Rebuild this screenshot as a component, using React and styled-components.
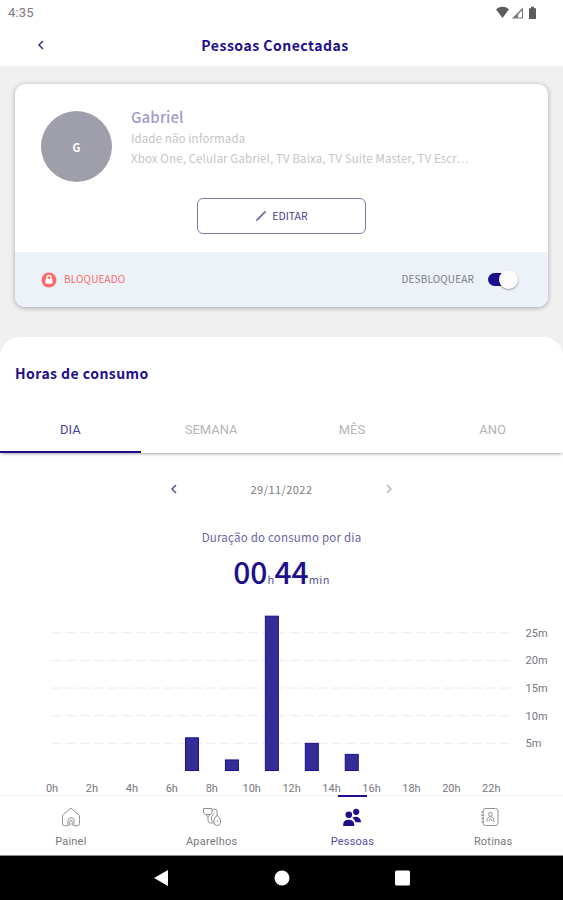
import React, { useState } from "react";
import styled, { createGlobalStyle, ThemeProvider } from "styled-components";

const theme = {
  colors: {
    navy: "#1d0f8c",
    text: "#7b7b80",
    muted: "#b5b5b5",
    red: "#f96a6a",
  },
  fonts: {
    brand: '"Noto Sans CJK SC", "Noto Sans", sans-serif',
    system: 'Roboto, "Liberation Sans", sans-serif',
  },
};

const GlobalStyle = createGlobalStyle`
  * {
    box-sizing: border-box;
  }
  body {
    margin: 0;
    background: #ffffff;
  }
  button {
    font: inherit;
    color: inherit;
    background: none;
    border: 0;
    padding: 0;
    letter-spacing: inherit;
  }
`;

const Screen = styled.div`
  width: 563px;
  height: 900px;
  display: flex;
  flex-direction: column;
  overflow: hidden;
  background: #f0f0f0;
  font-family: ${({ theme }) => theme.fonts.brand};
  color: ${({ theme }) => theme.colors.text};
`;

const StatusBar = styled.div`
  display: flex;
  justify-content: space-between;
  align-items: center;
  height: 24px;
  padding: 1px 24px 0 8px;
  background: #ffffff;
  font-family: ${({ theme }) => theme.fonts.system};
  font-size: 13px;
  letter-spacing: 0.2px;
`;

const Header = styled.header`
  display: grid;
  grid-template-columns: 68px 1fr 54px;
  align-items: center;
  justify-items: center;
  height: 42px;
  background: #ffffff;
  color: ${({ theme }) => theme.colors.navy};
  button {
    display: flex;
    padding-left: 13px;
  }
`;

const Title = styled.h1`
  margin: 0;
  padding-right: 27px;
  font-size: 14px;
  line-height: 20px;
  font-weight: 700;
  letter-spacing: 0.5px;
  white-space: nowrap;
`;

const Card = styled.section`
  flex: none;
  height: 223px;
  margin: 18px 15px 30px;
  border-radius: 10px;
  overflow: hidden;
  background: #ffffff;
  box-shadow: 0 1px 5px rgba(0, 0, 0, 0.32);
`;

const Profile = styled.div`
  display: flex;
  height: 114px;
  padding: 27px 27px 0 26px;
`;

const Avatar = styled.div`
  display: flex;
  align-items: center;
  justify-content: center;
  width: 71px;
  height: 71px;
  margin-right: 19px;
  border-radius: 50%;
  background: #9f9eab;
  color: #ffffff;
  font-size: 11px;
  font-weight: 700;
`;

const Person = styled.div`
  h2 {
    margin: -4px 0 1px;
    font-size: 15px;
    line-height: 20px;
    font-weight: 500;
    letter-spacing: 0.1px;
    color: #a29bd0;
  }
  p {
    margin: 0;
    font-size: 11.5px;
    line-height: 20px;
    letter-spacing: 0.12px;
    color: #c3c5c7;
    white-space: nowrap;
  }
`;

const EditButton = styled.button`
  display: flex;
  align-items: center;
  justify-content: center;
  gap: 5px;
  width: 169px;
  height: 36px;
  margin: 0 auto 18px;
  padding-bottom: 1px;
  border: 1px solid #7d78b2;
  border-radius: 6px;
  font-size: 10.5px;
  color: #4a4290;
`;

const CardFooter = styled.div`
  display: flex;
  align-items: center;
  height: 55px;
  padding: 0 31px 0 26px;
  background: #edf2f8;
  font-size: 10px;
  line-height: 16px;
  letter-spacing: 0.15px;
`;

const FooterText = styled.span`
  margin-top: -2px;
`;

const Blocked = styled.span`
  display: flex;
  align-items: center;
  gap: 7px;
  margin-right: auto;
  color: ${({ theme }) => theme.colors.red};
`;

const Switch = styled.button`
  display: flex;
  align-items: center;
  justify-content: ${({ $on }) => ($on ? "flex-end" : "flex-start")};
  width: 29px;
  height: 13px;
  margin-left: 14px;
  border-radius: 7px;
  background: ${({ $on, theme }) => ($on ? theme.colors.navy : "#b9b9c0")};
`;

const Knob = styled.span`
  flex: none;
  width: 19px;
  height: 19px;
  margin-right: -1px;
  border-radius: 50%;
  background: #fcfcfc;
  box-shadow: 0 1px 2px rgba(0, 0, 0, 0.35);
`;

const Panel = styled.main`
  flex: none;
  height: 458px;
  border-radius: 20px 20px 0 0;
  background: #ffffff;
`;

const PanelTitle = styled.h3`
  margin: 0;
  padding: 26px 15px 0;
  height: 70px;
  font-size: 14px;
  line-height: 20px;
  font-weight: 700;
  letter-spacing: 0.45px;
  color: ${({ theme }) => theme.colors.navy};
`;

const Tabs = styled.div`
  display: grid;
  grid-template-columns: repeat(4, 1fr);
  height: 46px;
  box-shadow: 0 2px 3px -1px rgba(0, 0, 0, 0.35);
  font-family: ${({ theme }) => theme.fonts.system};
  font-size: 13px;
`;

const Tab = styled.button`
  border-bottom: 2px solid
    ${({ $active, theme }) => ($active ? theme.colors.navy : "transparent")};
  color: ${({ $active, theme }) => ($active ? "#4a4290" : theme.colors.muted)};
`;

const DateRow = styled.div`
  display: flex;
  align-items: center;
  justify-content: space-between;
  width: 223px;
  height: 20px;
  margin: 26px auto 0;
  font-size: 11px;
  letter-spacing: 0.45px;
  svg {
    display: block;
  }
`;

const Caption = styled.p`
  margin: 28px 0 0;
  text-align: center;
  font-size: 11.5px;
  line-height: 20px;
  letter-spacing: 0.22px;
  color: #6a64a4;
`;

const Duration = styled.p`
  display: flex;
  align-items: baseline;
  justify-content: center;
  margin: 4px 0 0;
  height: 40px;
  line-height: 40px;
  font-size: 30px;
  font-weight: 500;
  color: ${({ theme }) => theme.colors.navy};
  small {
    font-size: 11px;
    font-weight: 400;
    letter-spacing: 0.4px;
    color: #5b549c;
  }
`;

const ChartSvg = styled.svg`
  display: block;
  margin-top: 17px;
  overflow: visible;
  font-family: ${({ theme }) => theme.fonts.system};
  font-size: 11px;
  fill: #77777d;
`;

const BottomNav = styled.nav`
  flex: none;
  display: grid;
  grid-template-columns: repeat(4, 1fr);
  height: 61px;
  background: #ffffff;
  border-bottom: 1px solid #8b8b8b;
  font-family: ${({ theme }) => theme.fonts.system};
  font-size: 11px;
  letter-spacing: 0.2px;
`;

const NavItem = styled.button`
  display: flex;
  flex-direction: column;
  align-items: center;
  padding-left: 1px;
  border-top: 1px solid #f1f1f1;
  color: ${({ $active }) => ($active ? "#554ca6" : "#77777c")};
  svg {
    margin: 11px 0 8px;
  }
`;

const Marker = styled.span`
  width: 29px;
  height: 2px;
  margin-top: -1px;
  margin-bottom: -1px;
  background: ${({ $active, theme }) =>
    $active ? theme.colors.navy : "transparent"};
`;

const SystemBar = styled.div`
  flex: none;
  display: flex;
  justify-content: center;
  align-items: center;
  height: 44px;
  background: #000000;
`;

const Chevron = ({ right, color }) => (
  <svg width="8" height="12" viewBox="0 0 8 12" fill="none">
    <path
      d={right ? "M2 2l4 4-4 4" : "M6 2L2 6l4 4"}
      stroke={color}
      strokeWidth="1.5"
    />
  </svg>
);

const StatusIcons = () => (
  <svg width="44" height="14" viewBox="0 0 44 14" fill="#5c5c5c">
    <path d="M1 3.2Q7.5-1.6 14 3.2L7.5 12z" />
    <path d="M17 12.4L28 1.4v11z" fill="#777" />
    <path d="M23 8.6l4-4.2v7h-4z" fill="#fff" />
    <path d="M34 2.2h2V.8h3v1.400h2V13h-7z" />
  </svg>
);

const HomeIcon = () => (
  <svg width="20" height="20" viewBox="0 0 20 20" fill="none" stroke="#929297">
    <path d="M1.5 8.5L10 1l8.500 7.500v8a2.200 2.200 0 0 1-2.200 2.200h-3.300v-5a3 3 0 0 0-6 0v5H3.700a2.200 2.200 0 0 1-2.200-2.200z" />
    <path d="M8.800 18.700v-4.200a1.200 1.200 0 0 1 2.400 0v4.200" />
  </svg>
);

const DevicesIcon = () => (
  <svg width="20" height="20" viewBox="0 0 20 20" fill="none" stroke="#929297">
    <path d="M1.500 1.500h8.500v4.500L8.500 7.500h-5l-2-1.500z" />
    <path d="M10 3.500Q12.500.8 15 3.200V9M4 7.500l2 2.500 2-2.500M6 10v3.500q0 2.500 3 2.500h2.500" />
    <path d="M12 6.500l-2.500 3v4l2.500 1.500" />
    <path d="M15.200 8.500q3.300 2 3.300 5v2.500q0 2.500-3.200 2.500t-3.300-2.500v-2.500q0-3 3.200-5z" />
    <path d="M15.200 13.500v1.500" />
  </svg>
);

const PeopleIcon = () => (
  <svg width="20" height="20" viewBox="0 0 20 20" fill="#1d0f8c">
    <circle cx="6.800" cy="7.800" r="3.300" />
    <circle cx="14.200" cy="4.800" r="3.100" />
    <path d="M1.200 19v-1.500q0-4.800 5.400-4.800t5.600 4.800V19z" />
    <path d="M10.300 10.500q7-2.500 8.700 3.800v1h-5.500q-.8-2.600-3.200-4.800z" />
  </svg>
);

const RoutineIcon = () => (
  <svg width="26" height="20" viewBox="0 0 26 20" fill="none" stroke="#929297">
    <rect x="3" y="1.500" width="15" height="17" rx="2.500" />
    <path d="M1.200 5h3M1.200 8.300h3M1.200 11.600h3M1.200 15h3" />
    <circle cx="10.500" cy="7.300" r="1.900" />
    <path d="M7 14.700q0-5 3.500-5t3.500 5M8.800 14.200l1.700-2.700 1.700 2.700" />
  </svg>
);

const usage = [
  { hour: 7, minutes: 6 },
  { hour: 9, minutes: 2 },
  { hour: 11, minutes: 28 },
  { hour: 13, minutes: 5 },
  { hour: 15, minutes: 3 },
];

const hours = [0, 2, 4, 6, 8, 10, 12, 14, 16, 18, 20, 22];
const minuteMarks = [5, 10, 15, 20, 25];

const BASE = 163;
const PER_MINUTE = 5.53;
const hourX = (hour) => 52 + hour * 19.97;

const UsageChart = () => (
  <ChartSvg width="563" height="185" viewBox="0 0 563 185">
    {minuteMarks.map((m) => (
      <g key={m}>
        <line
          x1="51.5"
          x2="514"
          y1={BASE - m * PER_MINUTE}
          y2={BASE - m * PER_MINUTE}
          stroke="#ebebeb"
          strokeDasharray="10 4"
        />
        <text x="525.500" y={BASE - m * PER_MINUTE + 4}>
          {m}m
        </text>
      </g>
    ))}
    {usage.map(({ hour, minutes }) => (
      <rect
        key={hour}
        x={hourX(hour) - 6.3}
        y={BASE - minutes * PER_MINUTE}
        width="13"
        height={minutes * PER_MINUTE - 0.5}
        fill="#362c98"
        stroke="#1d0f8c"
      />
    ))}
    {hours.map((h) => (
      <text key={h} x={hourX(h)} y="184" textAnchor="middle">
        {`${h}h`}
      </text>
    ))}
  </ChartSvg>
);

const tabs = ["DIA", "SEMANA", "MÊS", "ANO"];

const navItems = [
  { label: "Painel", Icon: HomeIcon },
  { label: "Aparelhos", Icon: DevicesIcon },
  { label: "Pessoas", Icon: PeopleIcon },
  { label: "Rotinas", Icon: RoutineIcon },
];

const App = () => {
  const [blocked, setBlocked] = useState(true);
  const [tab, setTab] = useState("DIA");
  const [page, setPage] = useState("Pessoas");

  return (
    <ThemeProvider theme={theme}>
      <GlobalStyle />
      <Screen>
        <StatusBar>
          <span>4:35</span>
          <StatusIcons />
        </StatusBar>
        <Header>
          <button aria-label="Voltar">
            <Chevron color="#3c3194" />
          </button>
          <Title>Pessoas Conectadas</Title>
        </Header>

        <Card>
          <Profile>
            <Avatar>G</Avatar>
            <Person>
              <h2>Gabriel</h2>
              <p>Idade não informada</p>
              <p>Xbox One, Celular Gabriel, TV Baixa, TV Suite Master, TV Escr…</p>
            </Person>
          </Profile>
          <EditButton>
            <svg width="12" height="12" viewBox="0 0 12 12">
              <path d="M.8 11.200l.7-2.200L10 .8l1.200 1.200-8.200 8.200z" fill="#726cab" />
            </svg>
            EDITAR
          </EditButton>
          <CardFooter>
            <Blocked>
              <svg width="16" height="16" viewBox="0 0 16 16" fill="none">
                <circle cx="8" cy="8" r="7.500" fill="#f96a6a" />
                <rect x="4.500" y="6.800" width="7" height="5" rx="1" fill="#fff" />
                <path d="M6 7V5.500a2 2 0 0 1 4 0V7" stroke="#fff" strokeWidth="1.300" />
              </svg>
              <FooterText>BLOQUEADO</FooterText>
            </Blocked>
            <FooterText>DESBLOQUEAR</FooterText>
            <Switch $on={blocked} onClick={() => setBlocked(!blocked)}>
              <Knob />
            </Switch>
          </CardFooter>
        </Card>

        <Panel>
          <PanelTitle>Horas de consumo</PanelTitle>
          <Tabs>
            {tabs.map((name) => (
              <Tab key={name} $active={tab === name} onClick={() => setTab(name)}>
                {name}
              </Tab>
            ))}
          </Tabs>
          <DateRow>
            <Chevron color="#5a5298" />
            <span>29/11/2022</span>
            <Chevron right color="#b9b7c6" />
          </DateRow>
          <Caption>Duração do consumo por dia</Caption>
          <Duration>
            00<small>h</small>44<small>min</small>
          </Duration>
          <UsageChart />
        </Panel>

        <BottomNav>
          {navItems.map(({ label, Icon }) => (
            <NavItem
              key={label}
              $active={page === label}
              onClick={() => setPage(label)}
            >
              <Marker $active={page === label} />
              <Icon />
              {label}
            </NavItem>
          ))}
        </BottomNav>
        <SystemBar>
          <svg width="258" height="18" viewBox="0 0 258 18" fill="#fff">
            <path d="M1 9L15 1v16z" />
            <circle cx="129" cy="9" r="7.500" />
            <rect x="242" y="1.500" width="15" height="15" rx="1.500" />
          </svg>
        </SystemBar>
      </Screen>
    </ThemeProvider>
  );
};

export default App;
